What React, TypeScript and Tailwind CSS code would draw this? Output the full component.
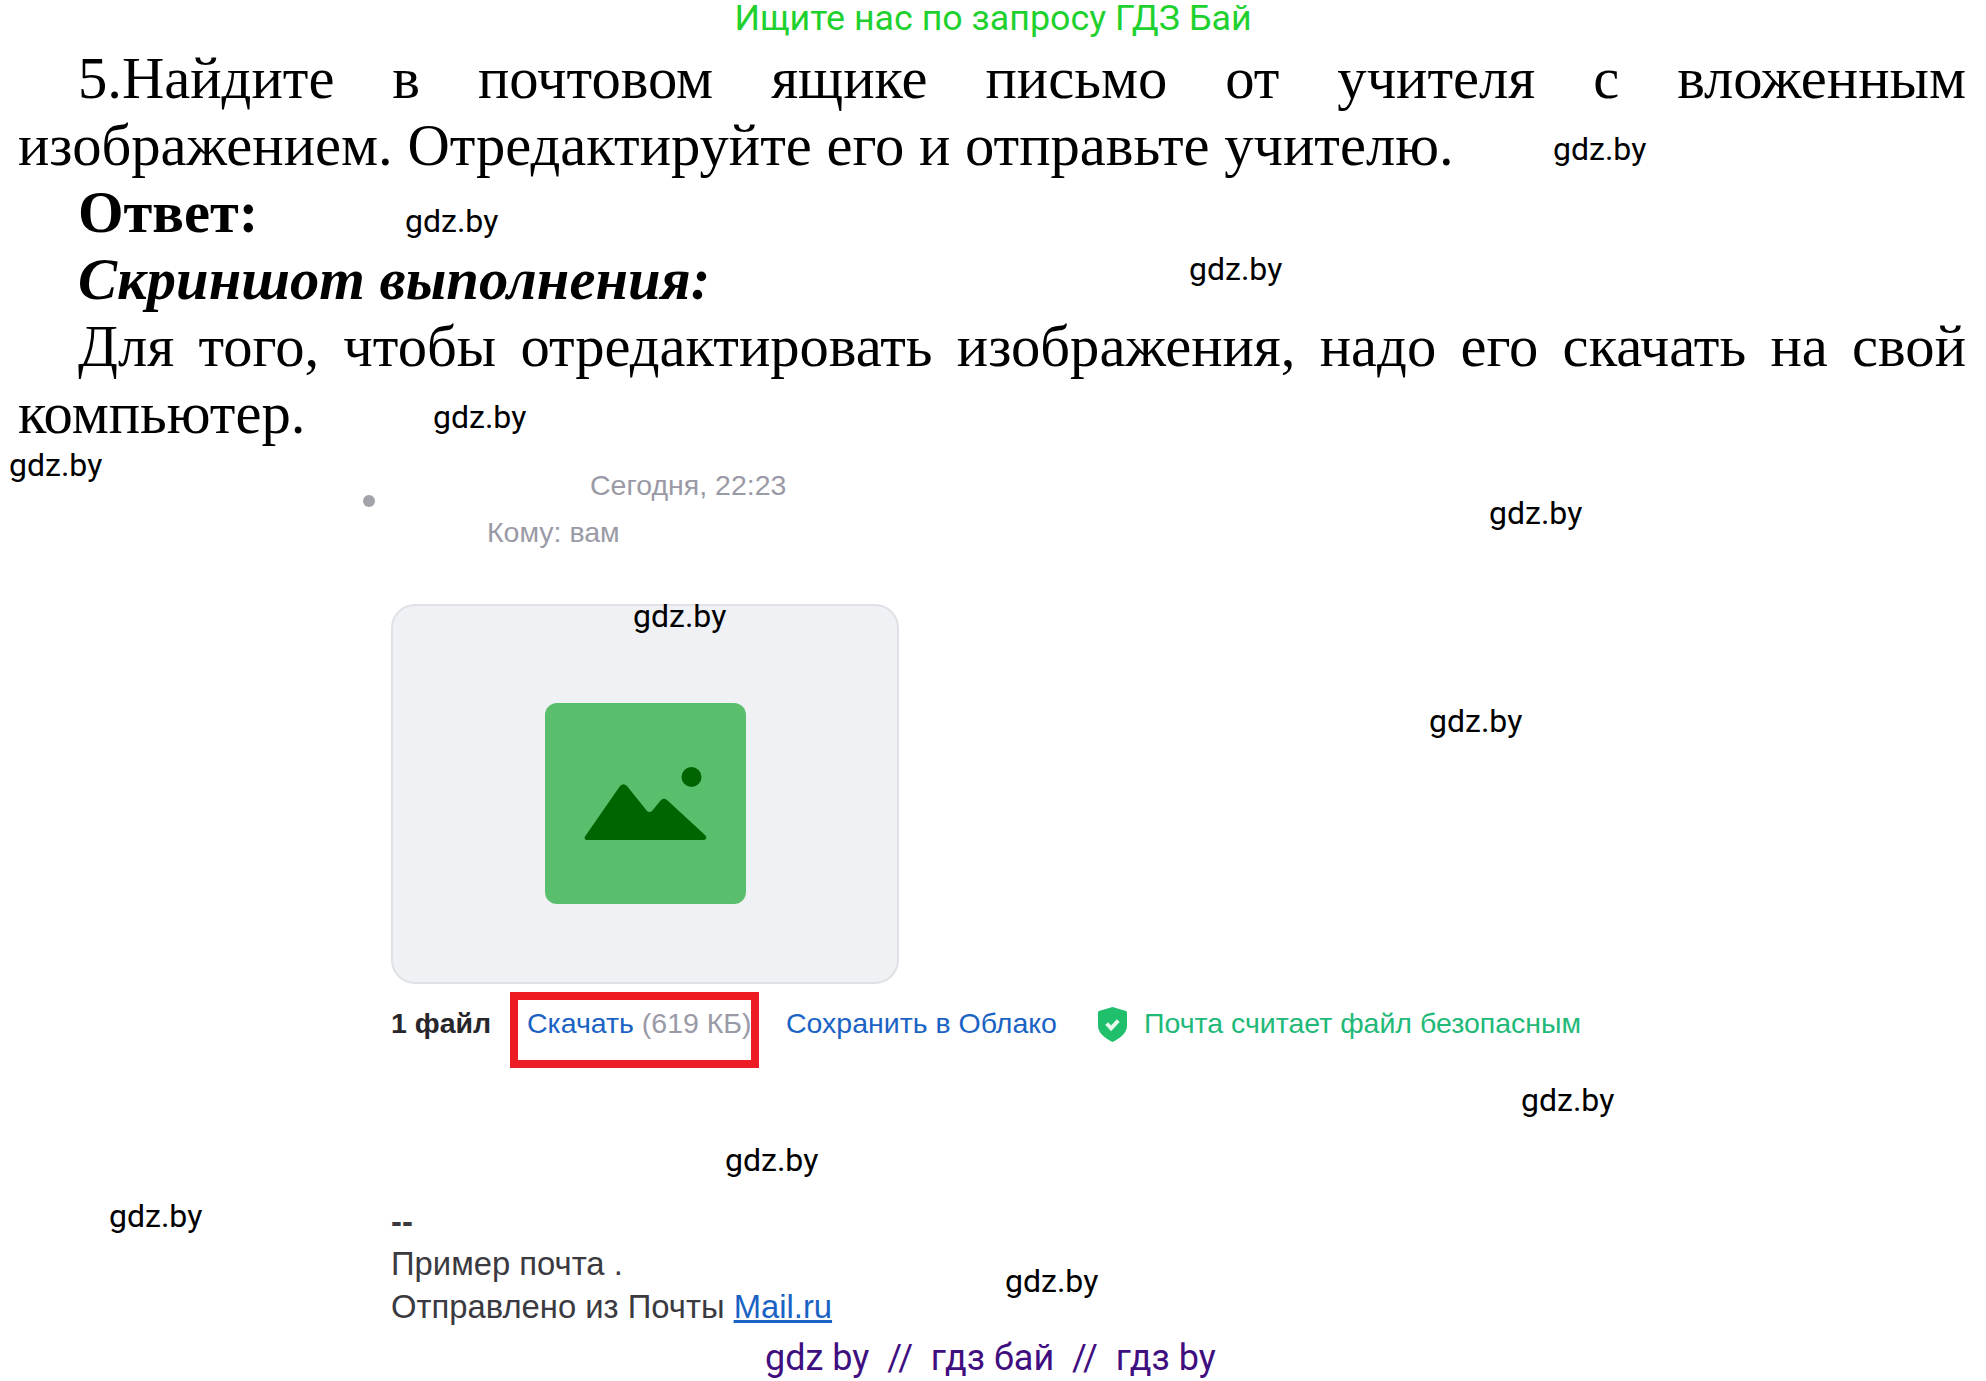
const marks = [
  { left: "left-[1553px]", top: "top-[131px]" },
  { left: "left-[405px]", top: "top-[203px]" },
  { left: "left-[1189px]", top: "top-[251px]" },
  { left: "left-[433px]", top: "top-[399px]" },
  { left: "left-[9px]", top: "top-[447px]" },
  { left: "left-[1489px]", top: "top-[495px]" },
  { left: "left-[633px]", top: "top-[598px]" },
  { left: "left-[1429px]", top: "top-[703px]" },
  { left: "left-[1521px]", top: "top-[1082px]" },
  { left: "left-[725px]", top: "top-[1142px]" },
  { left: "left-[109px]", top: "top-[1198px]" },
  { left: "left-[1005px]", top: "top-[1263px]" },
]

function ImageIcon() {
  return (
    <svg viewBox="0 0 201 201" className="h-[201px] w-[201px]">
      <circle cx="146.500" cy="74" r="10" fill="#006400" />
      <path
        d="M41 137 a2.500 2.500 0 0 1 -1 -3.500 L75 83 q3.500 -3.500 7 0 L102 108 q2 2 5 0 L116 97 q3 -2.500 6 0 L160 132 q2 2 1 4 q-1 1 -3 1 Z"
        fill="#006400"
      />
    </svg>
  )
}

function ShieldIcon() {
  return (
    <svg viewBox="0 0 30 36" className="h-[35px] w-[29px]">
      <path d="M15 0 L29 4 Q30 4 30 6 L30 19 Q30 29 15 36 Q0 29 0 19 L0 6 Q0 4 1 4 Z" fill="#1fbf6c" />
      <path d="M9 17 L13.500 22 L21 14" fill="none" stroke="#e8f8ef" strokeWidth="4" />
    </svg>
  )
}

export default function App() {
  return (
    <div className="relative h-[1381px] w-[1986px] overflow-hidden bg-white text-black">
      <p className="h-[36px] text-center font-['Roboto',sans-serif] text-[35.800px] leading-[36px] text-[#1fd12f]">
        Ищите нас по запросу ГДЗ Бай
      </p>

      <div className="mt-[9px] pl-[18px] pr-[20px] font-['Liberation_Serif',serif] text-[58.600px] leading-[67px]">
        <p className="indent-[60px] [text-align-last:justify]">5.Найдите в почтовом ящике письмо от учителя с вложенным</p>
        <p>изображением. Отредактируйте его и отправьте учителю.</p>
        <p className="indent-[60px] font-bold">Ответ:</p>
        <p className="indent-[60px] font-bold italic">Скриншот выполнения:</p>
        <p className="indent-[60px] [text-align-last:justify]">Для того, чтобы отредактировать изображения, надо его скачать на свой</p>
        <p>компьютер.</p>
      </div>

      <div className="pl-[363px] font-['Liberation_Sans',sans-serif]">
        <div className="mt-[22px] flex h-[80px] items-start text-[28.500px] text-[#9a9aa6]">
          <span className="mt-[26px] h-3 w-3 rounded-full bg-[#a3a3aa]" />
          <div className="ml-[112px]">
            <p className="ml-[103px] leading-[32px]">Сегодня, 22:23</p>
            <p className="mt-[15px] leading-[32px]">Кому: вам</p>
          </div>
        </div>

        <div className="ml-[28px] mt-[55px] flex h-[380px] w-[508px] items-center justify-center rounded-[24px] border-2 border-[#dfe1e6] bg-[#eff1f5] pt-[19px]">
          <div className="h-[201px] w-[201px] rounded-[12px] bg-[#5abf6d]">
            <ImageIcon />
          </div>
        </div>

        <div className="ml-[28px] mt-[8px] flex items-start text-[28.500px] leading-[32px]">
          <span className="mt-[15px] w-[119px] font-bold text-[#26262b]">1 файл</span>
          <div className="h-[76px] w-[249px] border-[8px] border-[#ed1c24] pl-[9px] pt-[7px] whitespace-nowrap">
            <span className="text-[#1a63c4]">Скачать</span> <span className="text-[#9a9aa6]">(619 КБ)</span>
          </div>
          <span className="ml-[27px] mt-[15px] text-[#1a63c4]">Сохранить в Облако</span>
          <span className="ml-[41px] mt-[15px]">
            <ShieldIcon />
          </span>
          <span className="ml-[17px] mt-[15px] text-[#22b978]">Почта считает файл безопасным</span>
        </div>

        <div className="ml-[28px] mt-[133px] text-[32.800px] leading-[43px] text-[#3a3a40]">
          <p className="font-bold leading-[41px]">--</p>
          <p>Пример почта .</p>
          <p>
            Отправлено из Почты <span className="text-[#1a63c4] underline">Mail.ru</span>
          </p>
        </div>
      </div>

      <p className="mt-[8px] pl-[765px] font-['Roboto',sans-serif] text-[36px] leading-[44px] whitespace-pre text-[#3f0f7f]">
        gdz by  //  гдз бай  //  гдз by
      </p>

      {marks.map((mark, i) => (
        <span
          key={i}
          className={`absolute font-['Roboto',sans-serif] text-[32px] leading-[36px] ${mark.left} ${mark.top}`}
        >
          gdz.by
        </span>
      ))}
    </div>
  )
}
